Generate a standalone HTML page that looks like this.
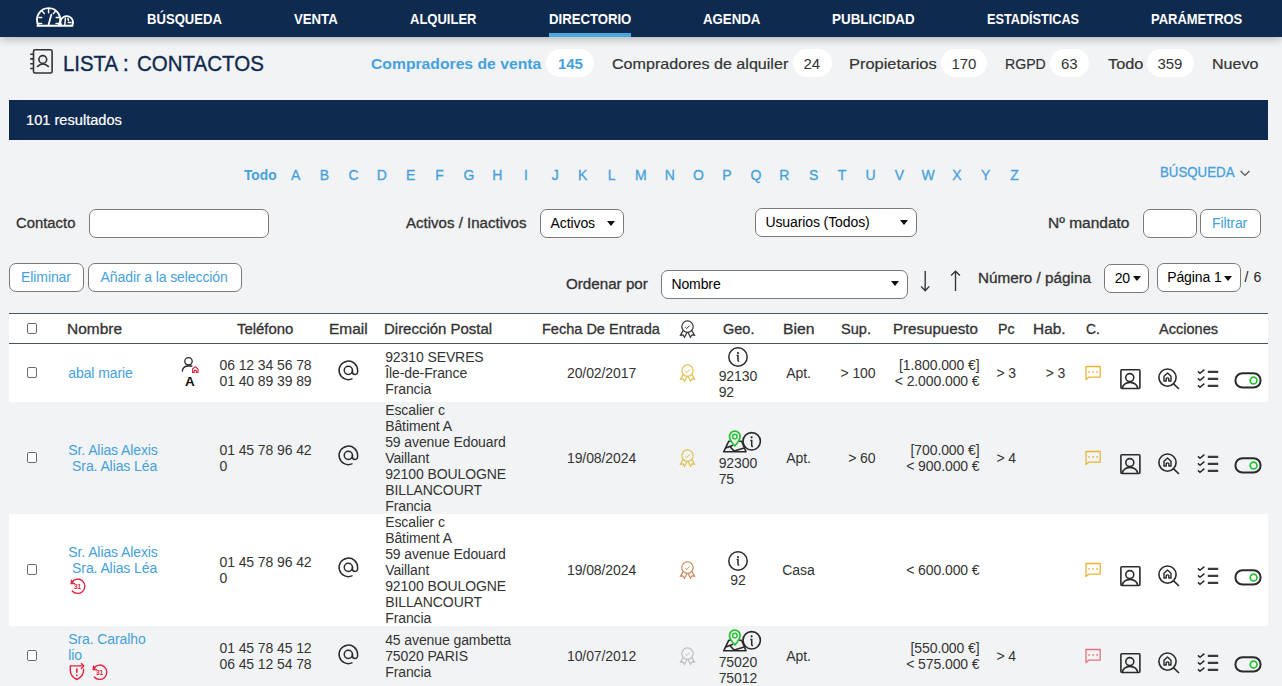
<!DOCTYPE html>
<html><head><meta charset="utf-8">
<style>
*{box-sizing:border-box;margin:0;padding:0}
html,body{width:1282px;height:686px;overflow:hidden;background:#f2f3f5;font-family:"Liberation Sans",sans-serif;color:#222}
.a{position:absolute;white-space:nowrap;transform-origin:0 0}
.nav{position:absolute;left:0;top:0;width:1282px;height:37px;background:#0f2a4f;box-shadow:0 2px 9px rgba(0,0,0,.28)}
.ul{position:absolute;top:33px;height:4px;background:#4aa8e0}
.pill{position:absolute;top:49px;height:28px;background:#fff;border-radius:14px}
.bar{position:absolute;left:9px;top:100px;width:1259px;height:40px;background:#0f2a4f}
.box{position:absolute;background:#fff;border:1px solid #7a7a7a;border-radius:7px}
.tri{position:absolute;width:0;height:0;border-left:4px solid transparent;border-right:4px solid transparent;border-top:5px solid #111}
.th{position:absolute;left:9px;top:313px;width:1259px;height:31px;background:#fff;border-top:1.5px solid #4b5560;border-bottom:1.5px solid #4b5560}
.cb{position:absolute;width:10px;height:11px;border:1.3px solid #6b6b6b;border-radius:2px;background:#fff}
.row{position:absolute;left:9px;width:1259px}
.w{background:#fff}
.t{position:absolute;white-space:nowrap;font-size:14px;line-height:16px;color:#333;letter-spacing:-0.1px}
.k{color:#45a1dc}
svg{position:absolute;overflow:visible}

</style></head><body>
<div class="nav">
  <svg style="left:0;top:0" width="80" height="37" viewBox="0 0 80 37">
    <g fill="none" stroke="#fff" stroke-linecap="round">
      <path d="M38.4 25.2 A11.6 11.6 0 1 1 58.8 25.2" stroke-width="1.9"/>
      <path d="M61.2 25.4 A6.3 6.3 0 1 1 72.2 25.4" stroke-width="1.8"/>
      <path d="M37.4 25.8 H72.4" stroke-width="2"/>
      <path d="M48.6 9.2v3.6M42.4 11.2l1.9 2.4M55.3 11.2l-1.9 2.4M38.9 17.6h2.8M56.2 17.6h2.8M38.6 23.4h3M56 23.4h3.2" stroke-width="1.5"/>
      <path d="M51.4 14.6 L48.6 24.6" stroke-width="1.8"/>
      <path d="M65.4 18.2 L64.8 25.2M67.9 18.6 L68.5 20.4M68.2 22.6 H71" stroke-width="1.5"/>
    </g>
  </svg>
  <div class="ul" style="left:549px;width:82px"></div>
</div>

<svg style="left:25px;top:44px" width="35" height="34" viewBox="0 0 35 34">
  <g fill="none" stroke="#333" stroke-width="1.6" stroke-linecap="butt">
    <rect x="8.5" y="5.8" width="18.6" height="23.2" rx="1.6"/>
    <path d="M5.2 10.2h3.3M5.2 14.9h3.3M5.2 19.8h3.3M5.2 24.5h3.3"/>
    <circle cx="17.8" cy="15.5" r="3.9"/>
    <path d="M12 22.8 Q17.9 17.2 23.9 22.8"/>
  </g>
</svg>

<div class="pill" style="left:546px;width:48px"></div>
<div class="pill" style="left:792.5px;width:39px"></div>
<div class="pill" style="left:940.5px;width:46.5px"></div>
<div class="pill" style="left:1050px;width:39px"></div>
<div class="pill" style="left:1146.5px;width:47px"></div>
<div class="t k" style="left:558px;top:55px;font:bold 15px/18px 'Liberation Sans';color:#45a1dc">145</div>
<div class="t" style="left:803.5px;top:55px;font:15px/18px 'Liberation Sans';color:#333">24</div>
<div class="t" style="left:951.5px;top:55px;font:15px/18px 'Liberation Sans';color:#333">170</div>
<div class="t" style="left:1061px;top:55px;font:15px/18px 'Liberation Sans';color:#333">63</div>
<div class="t" style="left:1157.5px;top:55px;font:15px/18px 'Liberation Sans';color:#333">359</div>

<div class="bar"></div>

<svg style="left:1240px;top:170px" width="11" height="7" viewBox="0 0 11 7"><path d="M0.6 1 L5 5.4 L9.4 1" fill="none" stroke="#555" stroke-width="1.2"/></svg>

<div class="box" style="left:89px;top:209px;width:180px;height:29px"></div>
<div class="box" style="left:540px;top:209px;width:84px;height:29px"></div>
<div class="t" style="left:550.6px;top:215px;color:#000">Activos</div>
<div class="tri" style="left:606.6px;top:221px"></div>
<div class="box" style="left:755px;top:208px;width:162px;height:29px"></div>
<div class="t" style="left:765.4px;top:214px;color:#000">Usuarios (Todos)</div>
<div class="tri" style="left:900.4px;top:220px"></div>
<div class="box" style="left:1143px;top:209px;width:54px;height:29px"></div>
<div class="box" style="left:1200px;top:209px;width:61px;height:29px"></div>
<div class="t k" style="left:1212.1px;top:215px">Filtrar</div>

<div class="box" style="left:9px;top:263px;width:75px;height:29px"></div>
<div class="t k" style="left:21.1px;top:269px">Eliminar</div>
<div class="box" style="left:88px;top:263px;width:154px;height:29px"></div>
<div class="t k" style="left:100.6px;top:269px">Añadir a la selección</div>

<div class="box" style="left:661px;top:270px;width:247px;height:29px"></div>
<div class="t" style="left:671.4px;top:276px;color:#000">Nombre</div>
<div class="tri" style="left:890.5px;top:281px"></div>
<svg style="left:910px;top:262px" width="60" height="40" viewBox="0 0 60 40">
  <g fill="none" stroke="#333" stroke-width="1.35">
    <path d="M15.2 9v19.6M11.1 24.4l4.1 4.4 4.1-4.4"/>
    <path d="M45.5 29V9.4M41.1 13.6l4.4-4.4 4.4 4.4"/>
  </g>
</svg>
<div class="box" style="left:1104px;top:264px;width:45px;height:29px"></div>
<div class="t" style="left:1114.7px;top:269.5px;color:#000">20</div>
<div class="tri" style="left:1133.4px;top:276px"></div>
<div class="box" style="left:1157px;top:263px;width:84px;height:29px"></div>
<div class="t" style="left:1167.2px;top:269px;color:#000">Página 1</div>
<div class="tri" style="left:1224.4px;top:275.5px"></div>
<div class="t" style="left:1244.5px;top:269px;color:#222;letter-spacing:0.6px">/ 6</div>

<div class="th"></div>
<div class="cb" style="left:27px;top:323px"></div>
<svg style="left:676px;top:317px" width="24" height="25" viewBox="0 0 24 25"><g fill="none" stroke="#333" stroke-width="1.2">
<circle cx="11.5" cy="9.6" r="5.7"/><path d="M9.3 10.2l1.4 1.3 3-3" stroke-width="1"/>
<path d="M7.2 13.4 L4.5 18.2 L7 17.8 L8.5 20.2 L10.9 15.8"/><path d="M15.8 13.4 L18.5 18.2 L16 17.8 L14.5 20.2 L12.1 15.8"/></g></svg>

<!-- rows backgrounds -->
<div class="row w" style="top:344px;height:58px"></div>
<div class="row w" style="top:514px;height:112px"></div>

<div class="a" style="left:147.2px;top:11px;font:bold 14px 'Liberation Sans';line-height:16px;color:#fff;transform:scaleX(0.935);">BÚSQUEDA</div>
<div class="a" style="left:294.2px;top:11px;font:bold 14px 'Liberation Sans';line-height:16px;color:#fff;transform:scaleX(0.942);">VENTA</div>
<div class="a" style="left:409.8px;top:11px;font:bold 14px 'Liberation Sans';line-height:16px;color:#fff;transform:scaleX(0.929);">ALQUILER</div>
<div class="a" style="left:548.8px;top:11px;font:bold 14px 'Liberation Sans';line-height:16px;color:#fff;transform:scaleX(0.939);">DIRECTORIO</div>
<div class="a" style="left:702.9px;top:11px;font:bold 14px 'Liberation Sans';line-height:16px;color:#fff;transform:scaleX(0.946);">AGENDA</div>
<div class="a" style="left:832.2px;top:11px;font:bold 14px 'Liberation Sans';line-height:16px;color:#fff;transform:scaleX(0.958);">PUBLICIDAD</div>
<div class="a" style="left:986.9px;top:11px;font:bold 14px 'Liberation Sans';line-height:16px;color:#fff;transform:scaleX(0.906);">ESTADÍSTICAS</div>
<div class="a" style="left:1150.8px;top:11px;font:bold 14px 'Liberation Sans';line-height:16px;color:#fff;transform:scaleX(0.926);">PARÁMETROS</div>
<div class="a" style="left:63.2px;top:50px;font:22px 'Liberation Sans';line-height:28px;color:#0f2a4f;transform:scaleX(0.926);-webkit-text-stroke:0.35px currentColor;">LISTA</div>
<div class="a" style="left:122.8px;top:50px;font:22px 'Liberation Sans';line-height:28px;color:#0f2a4f;transform:scaleX(1.367);-webkit-text-stroke:0.35px currentColor;transform:none;">:</div>
<div class="a" style="left:136.9px;top:50px;font:22px 'Liberation Sans';line-height:28px;color:#0f2a4f;transform:scaleX(0.932);-webkit-text-stroke:0.35px currentColor;">CONTACTOS</div>
<div class="a" style="left:370.5px;top:55px;font:bold 15px 'Liberation Sans';line-height:18px;color:#45a1dc;transform:scaleX(1.047);">Compradores de venta</div>
<div class="a" style="left:612.3px;top:55px;font:15px 'Liberation Sans';line-height:18px;color:#333;transform:scaleX(1.073);-webkit-text-stroke:0.2px currentColor;">Compradores de alquiler</div>
<div class="a" style="left:848.9px;top:55px;font:15px 'Liberation Sans';line-height:18px;color:#333;transform:scaleX(1.095);-webkit-text-stroke:0.2px currentColor;">Propietarios</div>
<div class="a" style="left:1005.1px;top:55px;font:15px 'Liberation Sans';line-height:18px;color:#333;transform:scaleX(0.941);-webkit-text-stroke:0.2px currentColor;">RGPD</div>
<div class="a" style="left:1107.5px;top:55px;font:15px 'Liberation Sans';line-height:18px;color:#333;transform:scaleX(1.087);-webkit-text-stroke:0.2px currentColor;">Todo</div>
<div class="a" style="left:1211.9px;top:55px;font:15px 'Liberation Sans';line-height:18px;color:#333;transform:scaleX(1.071);-webkit-text-stroke:0.2px currentColor;">Nuevo</div>
<div class="a" style="left:26.4px;top:112px;font:14px 'Liberation Sans';line-height:16px;color:#fff;transform:scaleX(1.044);-webkit-text-stroke:0.2px currentColor;">101 resultados</div>
<div class="a" style="left:244.0px;top:167px;font:bold 14px 'Liberation Sans';line-height:16px;color:#45a1dc;transform:scaleX(0.981);">Todo</div>
<div class="a" style="left:291.0px;top:167px;font:14px 'Liberation Sans';line-height:16px;color:#45a1dc;-webkit-text-stroke:0.3px currentColor;">A</div>
<div class="a" style="left:319.8px;top:167px;font:14px 'Liberation Sans';line-height:16px;color:#45a1dc;-webkit-text-stroke:0.3px currentColor;">B</div>
<div class="a" style="left:348.5px;top:167px;font:14px 'Liberation Sans';line-height:16px;color:#45a1dc;-webkit-text-stroke:0.3px currentColor;">C</div>
<div class="a" style="left:376.8px;top:167px;font:14px 'Liberation Sans';line-height:16px;color:#45a1dc;-webkit-text-stroke:0.3px currentColor;">D</div>
<div class="a" style="left:406.0px;top:167px;font:14px 'Liberation Sans';line-height:16px;color:#45a1dc;-webkit-text-stroke:0.3px currentColor;">E</div>
<div class="a" style="left:435.2px;top:167px;font:14px 'Liberation Sans';line-height:16px;color:#45a1dc;-webkit-text-stroke:0.3px currentColor;">F</div>
<div class="a" style="left:463.5px;top:167px;font:14px 'Liberation Sans';line-height:16px;color:#45a1dc;-webkit-text-stroke:0.3px currentColor;">G</div>
<div class="a" style="left:492.2px;top:167px;font:14px 'Liberation Sans';line-height:16px;color:#45a1dc;-webkit-text-stroke:0.3px currentColor;">H</div>
<div class="a" style="left:524.0px;top:167px;font:14px 'Liberation Sans';line-height:16px;color:#45a1dc;-webkit-text-stroke:0.3px currentColor;">I</div>
<div class="a" style="left:551.8px;top:167px;font:14px 'Liberation Sans';line-height:16px;color:#45a1dc;-webkit-text-stroke:0.3px currentColor;">J</div>
<div class="a" style="left:578.0px;top:167px;font:14px 'Liberation Sans';line-height:16px;color:#45a1dc;-webkit-text-stroke:0.3px currentColor;">K</div>
<div class="a" style="left:607.8px;top:167px;font:14px 'Liberation Sans';line-height:16px;color:#45a1dc;-webkit-text-stroke:0.3px currentColor;">L</div>
<div class="a" style="left:635.0px;top:167px;font:14px 'Liberation Sans';line-height:16px;color:#45a1dc;-webkit-text-stroke:0.3px currentColor;">M</div>
<div class="a" style="left:664.8px;top:167px;font:14px 'Liberation Sans';line-height:16px;color:#45a1dc;-webkit-text-stroke:0.3px currentColor;">N</div>
<div class="a" style="left:693.0px;top:167px;font:14px 'Liberation Sans';line-height:16px;color:#45a1dc;-webkit-text-stroke:0.3px currentColor;">O</div>
<div class="a" style="left:722.2px;top:167px;font:14px 'Liberation Sans';line-height:16px;color:#45a1dc;-webkit-text-stroke:0.3px currentColor;">P</div>
<div class="a" style="left:750.5px;top:167px;font:14px 'Liberation Sans';line-height:16px;color:#45a1dc;-webkit-text-stroke:0.3px currentColor;">Q</div>
<div class="a" style="left:779.2px;top:167px;font:14px 'Liberation Sans';line-height:16px;color:#45a1dc;-webkit-text-stroke:0.3px currentColor;">R</div>
<div class="a" style="left:809.0px;top:167px;font:14px 'Liberation Sans';line-height:16px;color:#45a1dc;-webkit-text-stroke:0.3px currentColor;">S</div>
<div class="a" style="left:837.8px;top:167px;font:14px 'Liberation Sans';line-height:16px;color:#45a1dc;-webkit-text-stroke:0.3px currentColor;">T</div>
<div class="a" style="left:865.5px;top:167px;font:14px 'Liberation Sans';line-height:16px;color:#45a1dc;-webkit-text-stroke:0.3px currentColor;">U</div>
<div class="a" style="left:894.8px;top:167px;font:14px 'Liberation Sans';line-height:16px;color:#45a1dc;-webkit-text-stroke:0.3px currentColor;">V</div>
<div class="a" style="left:921.5px;top:167px;font:14px 'Liberation Sans';line-height:16px;color:#45a1dc;-webkit-text-stroke:0.3px currentColor;">W</div>
<div class="a" style="left:952.2px;top:167px;font:14px 'Liberation Sans';line-height:16px;color:#45a1dc;-webkit-text-stroke:0.3px currentColor;">X</div>
<div class="a" style="left:981.0px;top:167px;font:14px 'Liberation Sans';line-height:16px;color:#45a1dc;-webkit-text-stroke:0.3px currentColor;">Y</div>
<div class="a" style="left:1010.2px;top:167px;font:14px 'Liberation Sans';line-height:16px;color:#45a1dc;-webkit-text-stroke:0.3px currentColor;">Z</div>
<div class="a" style="left:1159.6px;top:164px;font:14px 'Liberation Sans';line-height:16px;color:#45a1dc;transform:scaleX(0.948);-webkit-text-stroke:0.3px currentColor;">BÚSQUEDA</div>
<div class="a" style="left:16.4px;top:215px;font:14px 'Liberation Sans';line-height:16px;color:#333;transform:scaleX(1.060);-webkit-text-stroke:0.3px currentColor;">Contacto</div>
<div class="a" style="left:405.9px;top:215px;font:14px 'Liberation Sans';line-height:16px;color:#333;transform:scaleX(1.075);-webkit-text-stroke:0.3px currentColor;">Activos / Inactivos</div>
<div class="a" style="left:1047.9px;top:215px;font:14px 'Liberation Sans';line-height:16px;color:#333;transform:scaleX(1.107);-webkit-text-stroke:0.3px currentColor;">Nº mandato</div>
<div class="a" style="left:565.9px;top:276px;font:14px 'Liberation Sans';line-height:16px;color:#333;transform:scaleX(1.084);-webkit-text-stroke:0.3px currentColor;">Ordenar por</div>
<div class="a" style="left:977.8px;top:270px;font:14px 'Liberation Sans';line-height:16px;color:#333;transform:scaleX(1.092);-webkit-text-stroke:0.3px currentColor;">Número / página</div>
<div class="a" style="left:67.3px;top:321px;font:14px 'Liberation Sans';line-height:16px;color:#333;transform:scaleX(1.104);-webkit-text-stroke:0.3px currentColor;">Nombre</div>
<div class="a" style="left:237.0px;top:321px;font:14px 'Liberation Sans';line-height:16px;color:#333;transform:scaleX(1.065);-webkit-text-stroke:0.3px currentColor;">Teléfono</div>
<div class="a" style="left:328.9px;top:321px;font:14px 'Liberation Sans';line-height:16px;color:#333;transform:scaleX(1.106);-webkit-text-stroke:0.3px currentColor;">Email</div>
<div class="a" style="left:384.3px;top:321px;font:14px 'Liberation Sans';line-height:16px;color:#333;transform:scaleX(1.069);-webkit-text-stroke:0.3px currentColor;">Dirección Postal</div>
<div class="a" style="left:542.0px;top:321px;font:14px 'Liberation Sans';line-height:16px;color:#333;transform:scaleX(1.037);-webkit-text-stroke:0.3px currentColor;">Fecha De Entrada</div>
<div class="a" style="left:722.5px;top:321px;font:14px 'Liberation Sans';line-height:16px;color:#333;transform:scaleX(1.035);-webkit-text-stroke:0.3px currentColor;">Geo.</div>
<div class="a" style="left:782.9px;top:321px;font:14px 'Liberation Sans';line-height:16px;color:#333;transform:scaleX(1.124);-webkit-text-stroke:0.3px currentColor;">Bien</div>
<div class="a" style="left:841.0px;top:321px;font:14px 'Liberation Sans';line-height:16px;color:#333;transform:scaleX(1.039);-webkit-text-stroke:0.3px currentColor;">Sup.</div>
<div class="a" style="left:892.9px;top:321px;font:14px 'Liberation Sans';line-height:16px;color:#333;transform:scaleX(1.079);-webkit-text-stroke:0.3px currentColor;">Presupuesto</div>
<div class="a" style="left:997.5px;top:321px;font:14px 'Liberation Sans';line-height:16px;color:#333;transform:scaleX(1.011);-webkit-text-stroke:0.3px currentColor;">Pc</div>
<div class="a" style="left:1033.4px;top:321px;font:14px 'Liberation Sans';line-height:16px;color:#333;transform:scaleX(1.102);-webkit-text-stroke:0.3px currentColor;">Hab.</div>
<div class="a" style="left:1085.5px;top:321px;font:14px 'Liberation Sans';line-height:16px;color:#333;transform:scaleX(0.992);-webkit-text-stroke:0.3px currentColor;">C.</div>
<div class="a" style="left:1159.0px;top:321px;font:14px 'Liberation Sans';line-height:16px;color:#333;transform:scaleX(1.039);-webkit-text-stroke:0.3px currentColor;">Acciones</div>
<div class="cb" style="left:27px;top:367px"></div>
<div class="t k" style="left:68.3px;top:365px;">abal marie</div>
<svg style="left:181px;top:357px" width="20" height="18" viewBox="0 0 20 18"><g fill="none" stroke="#2a2a2a" stroke-width="1.3">
<circle cx="7.5" cy="4.3" r="3.7"/><path d="M1.3 14.8 Q1.5 9.5 6.5 9 H11.3"/></g>
<path d="M11.6 15.4 V12 L14.3 9.6 L17 12 V15.4 H15.3 V13.6 Q14.3 12.6 13.3 13.6 V15.4 Z" fill="none" stroke="#e0223c" stroke-width="1.1" stroke-linejoin="round"/></svg>
<div class="t" style="left:185px;top:373.8px;font-weight:bold;font-size:13.5px;color:#111">A</div>
<div class="t " style="left:219.5px;top:357px;">06 12 34 56 78</div>
<div class="t " style="left:219.5px;top:373px;">01 40 89 39 89</div>
<svg style="left:335.75px;top:358.44px" width="24.7" height="24.7" viewBox="0 0 24 24"><g fill="none" stroke="#2a2a2a" stroke-width="1.45" stroke-linecap="round">
<circle cx="12" cy="12" r="4"/><path d="M16 12v1.5a2.5 2.5 0 0 0 5 0v-1.5a9 9 0 1 0 -5.5 8.28"/></g></svg>
<div class="t " style="left:385.2px;top:349px;">92310 SEVRES</div>
<div class="t " style="left:385.2px;top:365px;">Île-de-France</div>
<div class="t " style="left:385.2px;top:381px;">Francia</div>
<div class="t " style="left:567px;top:365px;">20/02/2017</div>
<svg style="left:676px;top:361px" width="24" height="25" viewBox="0 0 24 25"><g fill="none" stroke="#e2bf4f" stroke-width="1.2">
<circle cx="11.5" cy="9.6" r="5.7"/><path d="M9.3 10.2l1.4 1.3 3-3" stroke-width="1"/>
<path d="M7.2 13.4 L4.5 18.2 L7 17.8 L8.5 20.2 L10.9 15.8"/><path d="M15.8 13.4 L18.5 18.2 L16 17.8 L14.5 20.2 L12.1 15.8"/></g></svg>
<svg style="left:726.9px;top:345.8px" width="22" height="22" viewBox="0 0 22 22"><g fill="none" stroke="#2a2a2a" stroke-width="1.5">
<circle cx="11" cy="11" r="9.2"/><path d="M9.6 9.4 H11 V14.3 Q11 15.3 12.2 15.3"/></g><circle cx="11" cy="7" r="1.1" fill="#2a2a2a"/></svg>
<div class="t " style="left:718.7px;top:368px;">92130</div>
<div class="t " style="left:718.7px;top:384px;">92</div>
<div class="t" style="left:648.5px;width:300px;text-align:center;top:365px;">Apt.</div>
<div class="t" style="left:575.5px;width:300px;text-align:right;top:365px;">&gt; 100</div>
<div class="t" style="left:679.5px;width:300px;text-align:right;top:357px;">[1.800.000 €]</div>
<div class="t" style="left:679.5px;width:300px;text-align:right;top:373px;">&lt; 2.000.000 €</div>
<div class="t " style="left:996.4px;top:365px;">&gt; 3</div>
<div class="t " style="left:1045.7px;top:365px;">&gt; 3</div>
<svg style="left:1083px;top:363.8px" width="20" height="18" viewBox="0 0 20 18"><g fill="none" stroke="#e8b436" stroke-width="1.3" stroke-linejoin="round">
<path d="M3 2.5 H17.2 V13.1 H6 L3 15.6 Z"/></g>
<g fill="#e8b436"><circle cx="6.1" cy="7.9" r="0.85"/><circle cx="10.1" cy="7.9" r="0.85"/><circle cx="14.1" cy="7.9" r="0.85"/></g></svg>
<svg style="left:1110px;top:360px" width="160" height="35" viewBox="0 0 160 35">
<g fill="none" stroke="#2a2a2a" stroke-width="1.6">
<rect x="10.9" y="9.7" width="19" height="18.8" rx="1"/>
<circle cx="19.8" cy="17.6" r="4"/>
<path d="M12.4 28.4 A7.6 6 0 0 1 27.6 28.4"/>
<circle cx="57.5" cy="17.6" r="8.6"/>
<path d="M63.6 23.8 L69 29"/>
<path d="M54 21 V16.3 L57.5 13 L61 16.3 V21 H58.8 V18.4 Q57.5 17.4 56.2 18.4 V21 Z" stroke-width="1.4" stroke-linejoin="round"/>
</g>
<g fill="none" stroke="#2a2a2a" stroke-width="1.5">
<path d="M87.9 11.4 L90 13.3 L94.4 9.7M87.9 18.4 L90 20.3 L94.4 16.7M87.9 25.4 L90 27.3 L94.4 23.7"/>
</g>
<g stroke="#3a3a3a" stroke-width="2.1"><path d="M97.8 11.9 H108.2M97.8 18.9 H108.2M97.8 25.9 H108.2"/></g>
<rect x="125.4" y="13.2" width="25.2" height="14.4" rx="7.2" fill="none" stroke="#2a2a2a" stroke-width="2"/>
<circle cx="143.6" cy="20.5" r="3.4" fill="none" stroke="#25c234" stroke-width="1.7"/>
</svg>
<div class="cb" style="left:27px;top:452px"></div>
<div class="t k" style="left:68.3px;top:442px;">Sr. Alias Alexis</div>
<div class="t k" style="left:68.3px;top:458px;">&nbsp;Sra. Alias Léa</div>
<div class="t " style="left:219.5px;top:442px;">01 45 78 96 42</div>
<div class="t " style="left:219.5px;top:458px;">0</div>
<svg style="left:335.75px;top:443.44px" width="24.7" height="24.7" viewBox="0 0 24 24"><g fill="none" stroke="#2a2a2a" stroke-width="1.45" stroke-linecap="round">
<circle cx="12" cy="12" r="4"/><path d="M16 12v1.5a2.5 2.5 0 0 0 5 0v-1.5a9 9 0 1 0 -5.5 8.28"/></g></svg>
<div class="t " style="left:385.2px;top:402px;">Escalier c</div>
<div class="t " style="left:385.2px;top:418px;">Bâtiment A</div>
<div class="t " style="left:385.2px;top:434px;">59 avenue Edouard</div>
<div class="t " style="left:385.2px;top:450px;">Vaillant</div>
<div class="t " style="left:385.2px;top:466px;">92100 BOULOGNE</div>
<div class="t " style="left:385.2px;top:482px;">BILLANCOURT</div>
<div class="t " style="left:385.2px;top:498px;">Francia</div>
<div class="t " style="left:567px;top:450px;">19/08/2024</div>
<svg style="left:676px;top:446px" width="24" height="25" viewBox="0 0 24 25"><g fill="none" stroke="#e2bf4f" stroke-width="1.2">
<circle cx="11.5" cy="9.6" r="5.7"/><path d="M9.3 10.2l1.4 1.3 3-3" stroke-width="1"/>
<path d="M7.2 13.4 L4.5 18.2 L7 17.8 L8.5 20.2 L10.9 15.8"/><path d="M15.8 13.4 L18.5 18.2 L16 17.8 L14.5 20.2 L12.1 15.8"/></g></svg>
<svg style="left:718px;top:426px" width="48" height="30" viewBox="0 0 48 30">
<g fill="none" stroke="#2a2a2a" stroke-width="1.6" stroke-linejoin="round">
<path d="M10.7 15.3 L5.7 25.8 H28 L23.6 15.3 Z"/>
<path d="M7.7 22 L11.8 20.5 L16.2 25.1 L26.2 21.9"/>
<path d="M11.8 20.5 L14.9 19.2"/>
</g>
<path d="M16.8 19.8 C13.8 16.6 11.5 13.6 11.5 10.4 A5.3 5.3 0 0 1 22.1 10.4 C22.1 13.6 19.8 16.6 16.8 19.8 Z" fill="#f2f3f5" stroke="#25c234" stroke-width="1.7"/>
<circle cx="16.8" cy="10.6" r="2.3" fill="none" stroke="#25c234" stroke-width="1.5"/>
<circle cx="33.7" cy="15.3" r="8.7" fill="#f2f3f5" stroke="#2a2a2a" stroke-width="1.6"/>
<path d="M32.3 14.4 H33.7 V19.4 Q33.7 20.5 35 20.5" fill="none" stroke="#2a2a2a" stroke-width="1.5"/>
<circle cx="33.6" cy="11.3" r="1.1" fill="#2a2a2a"/>
</svg>
<div class="t " style="left:718.7px;top:455px;">92300</div>
<div class="t " style="left:718.7px;top:471px;">75</div>
<div class="t" style="left:648.5px;width:300px;text-align:center;top:450px;">Apt.</div>
<div class="t" style="left:575.5px;width:300px;text-align:right;top:450px;">&gt; 60</div>
<div class="t" style="left:679.5px;width:300px;text-align:right;top:442px;">[700.000 €]</div>
<div class="t" style="left:679.5px;width:300px;text-align:right;top:458px;">&lt; 900.000 €</div>
<div class="t " style="left:996.4px;top:450px;">&gt; 4</div>
<svg style="left:1083px;top:448.8px" width="20" height="18" viewBox="0 0 20 18"><g fill="none" stroke="#e8b436" stroke-width="1.3" stroke-linejoin="round">
<path d="M3 2.5 H17.2 V13.1 H6 L3 15.6 Z"/></g>
<g fill="#e8b436"><circle cx="6.1" cy="7.9" r="0.85"/><circle cx="10.1" cy="7.9" r="0.85"/><circle cx="14.1" cy="7.9" r="0.85"/></g></svg>
<svg style="left:1110px;top:445px" width="160" height="35" viewBox="0 0 160 35">
<g fill="none" stroke="#2a2a2a" stroke-width="1.6">
<rect x="10.9" y="9.7" width="19" height="18.8" rx="1"/>
<circle cx="19.8" cy="17.6" r="4"/>
<path d="M12.4 28.4 A7.6 6 0 0 1 27.6 28.4"/>
<circle cx="57.5" cy="17.6" r="8.6"/>
<path d="M63.6 23.8 L69 29"/>
<path d="M54 21 V16.3 L57.5 13 L61 16.3 V21 H58.8 V18.4 Q57.5 17.4 56.2 18.4 V21 Z" stroke-width="1.4" stroke-linejoin="round"/>
</g>
<g fill="none" stroke="#2a2a2a" stroke-width="1.5">
<path d="M87.9 11.4 L90 13.3 L94.4 9.7M87.9 18.4 L90 20.3 L94.4 16.7M87.9 25.4 L90 27.3 L94.4 23.7"/>
</g>
<g stroke="#3a3a3a" stroke-width="2.1"><path d="M97.8 11.9 H108.2M97.8 18.9 H108.2M97.8 25.9 H108.2"/></g>
<rect x="125.4" y="13.2" width="25.2" height="14.4" rx="7.2" fill="none" stroke="#2a2a2a" stroke-width="2"/>
<circle cx="143.6" cy="20.5" r="3.4" fill="none" stroke="#25c234" stroke-width="1.7"/>
</svg>
<div class="cb" style="left:27px;top:564px"></div>
<div class="t k" style="left:68.3px;top:544px;">Sr. Alias Alexis</div>
<div class="t k" style="left:68.3px;top:560px;">&nbsp;Sra. Alias Léa</div>
<svg style="left:66.9px;top:576px" width="20" height="20" viewBox="0 0 20 20"><g fill="none" stroke="#e2223e" stroke-width="1.35" stroke-linecap="round" stroke-linejoin="round">
<path d="M5.1 5.6 A7.2 7.2 0 1 1 5.2 15"/><path d="M4.5 4.2 L4.3 7.6 L7.6 7.6"/><path d="M4.3 7.6 L6.2 5.7"/></g>
<text x="10.4" y="12.7" font-family="Liberation Sans" font-weight="bold" font-size="6.6" fill="#e2223e" text-anchor="middle" letter-spacing="-0.3">31</text></svg>
<div class="t " style="left:219.5px;top:554px;">01 45 78 96 42</div>
<div class="t " style="left:219.5px;top:570px;">0</div>
<svg style="left:335.75px;top:555.44px" width="24.7" height="24.7" viewBox="0 0 24 24"><g fill="none" stroke="#2a2a2a" stroke-width="1.45" stroke-linecap="round">
<circle cx="12" cy="12" r="4"/><path d="M16 12v1.5a2.5 2.5 0 0 0 5 0v-1.5a9 9 0 1 0 -5.5 8.28"/></g></svg>
<div class="t " style="left:385.2px;top:514px;">Escalier c</div>
<div class="t " style="left:385.2px;top:530px;">Bâtiment A</div>
<div class="t " style="left:385.2px;top:546px;">59 avenue Edouard</div>
<div class="t " style="left:385.2px;top:562px;">Vaillant</div>
<div class="t " style="left:385.2px;top:578px;">92100 BOULOGNE</div>
<div class="t " style="left:385.2px;top:594px;">BILLANCOURT</div>
<div class="t " style="left:385.2px;top:610px;">Francia</div>
<div class="t " style="left:567px;top:562px;">19/08/2024</div>
<svg style="left:676px;top:558px" width="24" height="25" viewBox="0 0 24 25"><g fill="none" stroke="#c98a5e" stroke-width="1.2">
<circle cx="11.5" cy="9.6" r="5.7"/><path d="M9.3 10.2l1.4 1.3 3-3" stroke-width="1"/>
<path d="M7.2 13.4 L4.5 18.2 L7 17.8 L8.5 20.2 L10.9 15.8"/><path d="M15.8 13.4 L18.5 18.2 L16 17.8 L14.5 20.2 L12.1 15.8"/></g></svg>
<svg style="left:727px;top:550.4px" width="22" height="22" viewBox="0 0 22 22"><g fill="none" stroke="#2a2a2a" stroke-width="1.5">
<circle cx="11" cy="11" r="9.2"/><path d="M9.6 9.4 H11 V14.3 Q11 15.3 12.2 15.3"/></g><circle cx="11" cy="7" r="1.1" fill="#2a2a2a"/></svg>
<div class="t" style="left:588px;width:300px;text-align:center;top:572px;">92</div>
<div class="t" style="left:648.5px;width:300px;text-align:center;top:562px;">Casa</div>
<div class="t" style="left:679.5px;width:300px;text-align:right;top:562px;">&lt; 600.000 €</div>
<svg style="left:1083px;top:560.8px" width="20" height="18" viewBox="0 0 20 18"><g fill="none" stroke="#e8b436" stroke-width="1.3" stroke-linejoin="round">
<path d="M3 2.5 H17.2 V13.1 H6 L3 15.6 Z"/></g>
<g fill="#e8b436"><circle cx="6.1" cy="7.9" r="0.85"/><circle cx="10.1" cy="7.9" r="0.85"/><circle cx="14.1" cy="7.9" r="0.85"/></g></svg>
<svg style="left:1110px;top:557px" width="160" height="35" viewBox="0 0 160 35">
<g fill="none" stroke="#2a2a2a" stroke-width="1.6">
<rect x="10.9" y="9.7" width="19" height="18.8" rx="1"/>
<circle cx="19.8" cy="17.6" r="4"/>
<path d="M12.4 28.4 A7.6 6 0 0 1 27.6 28.4"/>
<circle cx="57.5" cy="17.6" r="8.6"/>
<path d="M63.6 23.8 L69 29"/>
<path d="M54 21 V16.3 L57.5 13 L61 16.3 V21 H58.8 V18.4 Q57.5 17.4 56.2 18.4 V21 Z" stroke-width="1.4" stroke-linejoin="round"/>
</g>
<g fill="none" stroke="#2a2a2a" stroke-width="1.5">
<path d="M87.9 11.4 L90 13.3 L94.4 9.7M87.9 18.4 L90 20.3 L94.4 16.7M87.9 25.4 L90 27.3 L94.4 23.7"/>
</g>
<g stroke="#3a3a3a" stroke-width="2.1"><path d="M97.8 11.9 H108.2M97.8 18.9 H108.2M97.8 25.9 H108.2"/></g>
<rect x="125.4" y="13.2" width="25.2" height="14.4" rx="7.2" fill="none" stroke="#2a2a2a" stroke-width="2"/>
<circle cx="143.6" cy="20.5" r="3.4" fill="none" stroke="#25c234" stroke-width="1.7"/>
</svg>
<div class="cb" style="left:27px;top:650px"></div>
<div class="t k" style="left:68.3px;top:631px;">Sra. Caralho</div>
<div class="t k" style="left:68.3px;top:647px;">lio</div>
<svg style="left:66px;top:660px" width="22" height="22" viewBox="0 0 22 22"><g fill="none" stroke="#e2223e" stroke-width="1.4" stroke-linecap="round" stroke-linejoin="round">
<path d="M17.4 5.9 H4.3 V10.5 C4.3 14.8 7.3 17.8 10.8 19.5 C14.3 17.8 17.6 14.8 17.6 10.2 V9.3"/>
<path d="M15.4 3.6 L17.8 6 L15.4 8.4"/></g>
<path d="M10.8 8.6 V12.8" stroke="#e2223e" stroke-width="1.6"/><circle cx="10.8" cy="15.3" r="0.9" fill="#e2223e"/></svg>
<svg style="left:89.2px;top:661.9px" width="20" height="20" viewBox="0 0 20 20"><g fill="none" stroke="#e2223e" stroke-width="1.35" stroke-linecap="round" stroke-linejoin="round">
<path d="M5.1 5.6 A7.2 7.2 0 1 1 5.2 15"/><path d="M4.5 4.2 L4.3 7.6 L7.6 7.6"/><path d="M4.3 7.6 L6.2 5.7"/></g>
<text x="10.4" y="12.7" font-family="Liberation Sans" font-weight="bold" font-size="6.6" fill="#e2223e" text-anchor="middle" letter-spacing="-0.3">31</text></svg>
<div class="t " style="left:219.5px;top:640px;">01 45 78 45 12</div>
<div class="t " style="left:219.5px;top:656px;">06 45 12 54 78</div>
<svg style="left:335.75px;top:642.44px" width="24.7" height="24.7" viewBox="0 0 24 24"><g fill="none" stroke="#2a2a2a" stroke-width="1.45" stroke-linecap="round">
<circle cx="12" cy="12" r="4"/><path d="M16 12v1.5a2.5 2.5 0 0 0 5 0v-1.5a9 9 0 1 0 -5.5 8.28"/></g></svg>
<div class="t " style="left:385.2px;top:632px;">45 avenue gambetta</div>
<div class="t " style="left:385.2px;top:648px;">75020 PARIS</div>
<div class="t " style="left:385.2px;top:664px;">Francia</div>
<div class="t " style="left:567px;top:648px;">10/07/2012</div>
<svg style="left:676px;top:644px" width="24" height="25" viewBox="0 0 24 25"><g fill="none" stroke="#bdbdbd" stroke-width="1.2">
<circle cx="11.5" cy="9.6" r="5.7"/><path d="M9.3 10.2l1.4 1.3 3-3" stroke-width="1"/>
<path d="M7.2 13.4 L4.5 18.2 L7 17.8 L8.5 20.2 L10.9 15.8"/><path d="M15.8 13.4 L18.5 18.2 L16 17.8 L14.5 20.2 L12.1 15.8"/></g></svg>
<svg style="left:718px;top:624.5px" width="48" height="30" viewBox="0 0 48 30">
<g fill="none" stroke="#2a2a2a" stroke-width="1.6" stroke-linejoin="round">
<path d="M10.7 15.3 L5.7 25.8 H28 L23.6 15.3 Z"/>
<path d="M7.7 22 L11.8 20.5 L16.2 25.1 L26.2 21.9"/>
<path d="M11.8 20.5 L14.9 19.2"/>
</g>
<path d="M16.8 19.8 C13.8 16.6 11.5 13.6 11.5 10.4 A5.3 5.3 0 0 1 22.1 10.4 C22.1 13.6 19.8 16.6 16.8 19.8 Z" fill="#f2f3f5" stroke="#25c234" stroke-width="1.7"/>
<circle cx="16.8" cy="10.6" r="2.3" fill="none" stroke="#25c234" stroke-width="1.5"/>
<circle cx="33.7" cy="15.3" r="8.7" fill="#f2f3f5" stroke="#2a2a2a" stroke-width="1.6"/>
<path d="M32.3 14.4 H33.7 V19.4 Q33.7 20.5 35 20.5" fill="none" stroke="#2a2a2a" stroke-width="1.5"/>
<circle cx="33.6" cy="11.3" r="1.1" fill="#2a2a2a"/>
</svg>
<div class="t " style="left:718.7px;top:654px;">75020</div>
<div class="t " style="left:718.7px;top:670px;">75012</div>
<div class="t" style="left:648.5px;width:300px;text-align:center;top:648px;">Apt.</div>
<div class="t" style="left:679.5px;width:300px;text-align:right;top:640px;">[550.000 €]</div>
<div class="t" style="left:679.5px;width:300px;text-align:right;top:656px;">&lt; 575.000 €</div>
<div class="t " style="left:996.4px;top:648px;">&gt; 4</div>
<svg style="left:1083px;top:646.8px" width="20" height="18" viewBox="0 0 20 18"><g fill="none" stroke="#e8707e" stroke-width="1.3" stroke-linejoin="round">
<path d="M3 2.5 H17.2 V13.1 H6 L3 15.6 Z"/></g>
<g fill="#e8707e"><circle cx="6.1" cy="7.9" r="0.85"/><circle cx="10.1" cy="7.9" r="0.85"/><circle cx="14.1" cy="7.9" r="0.85"/></g></svg>
<svg style="left:1110px;top:643.5px" width="160" height="35" viewBox="0 0 160 35">
<g fill="none" stroke="#2a2a2a" stroke-width="1.6">
<rect x="10.9" y="9.7" width="19" height="18.8" rx="1"/>
<circle cx="19.8" cy="17.6" r="4"/>
<path d="M12.4 28.4 A7.6 6 0 0 1 27.6 28.4"/>
<circle cx="57.5" cy="17.6" r="8.6"/>
<path d="M63.6 23.8 L69 29"/>
<path d="M54 21 V16.3 L57.5 13 L61 16.3 V21 H58.8 V18.4 Q57.5 17.4 56.2 18.4 V21 Z" stroke-width="1.4" stroke-linejoin="round"/>
</g>
<g fill="none" stroke="#2a2a2a" stroke-width="1.5">
<path d="M87.9 11.4 L90 13.3 L94.4 9.7M87.9 18.4 L90 20.3 L94.4 16.7M87.9 25.4 L90 27.3 L94.4 23.7"/>
</g>
<g stroke="#3a3a3a" stroke-width="2.1"><path d="M97.8 11.9 H108.2M97.8 18.9 H108.2M97.8 25.9 H108.2"/></g>
<rect x="125.4" y="13.2" width="25.2" height="14.4" rx="7.2" fill="none" stroke="#2a2a2a" stroke-width="2"/>
<circle cx="143.6" cy="20.5" r="3.4" fill="none" stroke="#25c234" stroke-width="1.7"/>
</svg>

</body></html>
